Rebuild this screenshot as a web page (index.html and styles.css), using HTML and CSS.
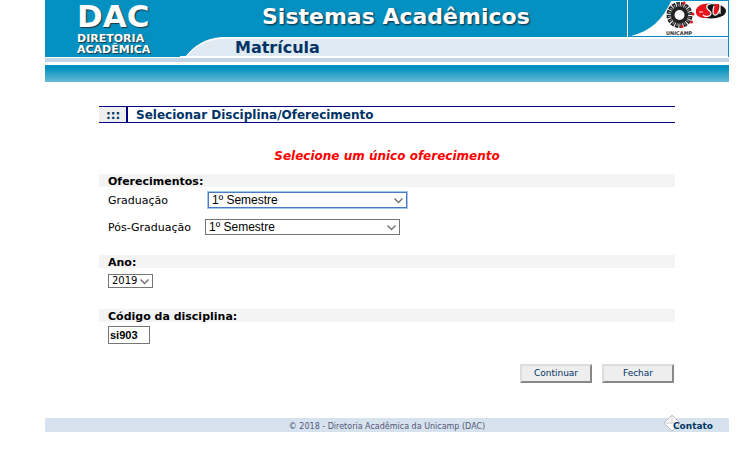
FILE: index.html
```html
<!DOCTYPE html>
<html lang="pt-BR">
<head>
<meta charset="utf-8">
<title>Sistemas Acadêmicos - Matrícula</title>
<link rel="stylesheet" href="styles.css">
</head>
<body>
<div class="page">
  <header class="header">
    <div class="brand"><strong>DAC</strong><span>DIRETORIA</span><span>ACADÊMICA</span></div>
    <div class="masthead">
      <div class="title-row">
        <h1>Sistemas Acadêmicos</h1>
        <svg class="logos" viewBox="0 0 102 37" role="img" aria-label="Unicamp">
          <rect width="102" height="37" fill="#0491c1"/>
          <path d="M0 0h1v37H0z" fill="#fff"/>
          <path d="M4 36C24 31 36 19 44 1H101V36Z" fill="#fff"/>
          <circle cx="52.500" cy="15" r="13" fill="#222"/>
          <circle cx="52.500" cy="15" r="11" fill="none" stroke="#fff" stroke-width="5" stroke-dasharray="1 3.320"/>
          <circle cx="52.500" cy="15" r="10" fill="none" stroke="#aaa" stroke-width="3" stroke-dasharray=".800 3.127" stroke-dashoffset="2"/>
          <circle cx="52.500" cy="15" r="5" fill="#fff"/>
          <g fill="#e8131b"><circle cx="57" cy="3" r="1.500"/><circle cx="66" cy="14" r="1.500"/><circle cx="64.500" cy="22" r="1.500"/><circle cx="55" cy="26.500" r="1.500"/></g>
          <ellipse cx="84" cy="11" rx="15" ry="7.500" fill="#151515"/>
          <path d="M69 12C69 6 75 3 82 4C78 6 79 9 83 11C85 14 83 17 79 18C73 18 69 16 69 12Z" fill="#e8131b"/>
          <path d="M88 4L92 4L91 14L87 15L86 10Z" fill="#e8131b"/>
          <path d="M88 4C82 3 79 5 80 8C81 11 85 11 84 14C83 17 78 17 76 15M87 6C85 12 86 16 89 15C92 14 93 8 93 5V14" fill="none" stroke="#fff" stroke-width="1.200"/>
          <path d="M72 12h4" stroke="#f5a3a5" stroke-width="1.500"/>
          <text x="39" y="35" class="unicamp">UNICAMP</text>
        </svg>
      </div>
      <div class="tab-row">
        <svg class="curve" viewBox="0 0 50 20" aria-hidden="true"><path d="M0 0H50L42 1C26 2 14 9 6 19H0Z" fill="#0491c1"/><path d="M50 0H42C25 1 14 9 6 19H50Z" fill="#fff"/><path d="M50 2H43C28 2 15 9 7 19H50Z" fill="#e0eaf3"/></svg>
        <h2>Matrícula</h2>
      </div>
    </div>
  </header>
  <div class="rule"></div>
  <div class="band"></div>

  <main class="content">
    <h3 class="heading"><span class="dots">:::</span><span class="heading-text">Selecionar Disciplina/Oferecimento</span></h3>
    <p class="notice">Selecione um único oferecimento</p>
    <form>
      <h4 class="section">Oferecimentos:</h4>
      <div class="field first">
        <label for="grad">Graduação</label>
        <span class="pick wide focused"><select id="grad"><option>1º Semestre</option><option>2º Semestre</option></select><svg viewBox="0 0 9 6" aria-hidden="true"><path d="M.5 .5L4.500 4.500L8.500 .5"/></svg></span>
      </div>
      <div class="field second">
        <label for="pos">Pós-Graduação</label>
        <span class="pick wide"><select id="pos"><option>1º Semestre</option><option>2º Semestre</option></select><svg viewBox="0 0 9 6" aria-hidden="true"><path d="M.5 .5L4.500 4.500L8.500 .5"/></svg></span>
      </div>
      <h4 class="section"><label for="ano">Ano:</label></h4>
      <div class="field year">
        <span class="pick small"><select id="ano"><option>2019</option><option>2018</option></select><svg viewBox="0 0 9 6" aria-hidden="true"><path d="M.5 .5L4.500 4.500L8.500 .5"/></svg></span>
      </div>
      <h4 class="section"><label for="codigo">Código da disciplina:</label></h4>
      <div class="field code"><input id="codigo" type="text" value="si903"></div>
      <div class="actions"><button type="submit">Continuar</button><button type="button">Fechar</button></div>
    </form>
  </main>

  <footer class="footer">
    <span class="copyright">© 2018 - Diretoria Acadêmica da Unicamp (DAC)</span>
    <a class="contact" href="#contato"><svg viewBox="0 0 18 18" aria-hidden="true"><path d="M1 9L9 1L17 9L9 17Z" fill="#fff" stroke="#bbb"/><path d="M9 1V9H17M9 9L1 9" fill="none" stroke="#ccc"/></svg><span>Contato</span></a>
  </footer>
</div>
</body>
</html>
```
FILE: styles.css
```css
* { box-sizing: border-box; }
body { margin: 0; background: #fff; color: #000; font: 11px/13px "DejaVu Sans", Verdana, sans-serif; }
h1, h2, h3, h4, p { margin: 0; }
.page { margin: 0 16px 0 45px; }

.header { display: flex; height: 57px; }
.brand { width: 135px; padding: 0 0 0 32px; background: #0491c1; color: #fff; font-weight: bold; font-size: 11px; line-height: 11px; text-shadow: 1px 1px 1px #234; }
.brand strong, .brand span { display: block; }
.brand strong { font-size: 31px; line-height: 33px; }
.masthead { flex: 1; }
.title-row { display: flex; height: 37px; background: #0491c1; }
.title-row h1 { flex: 1; padding-left: 82px; color: #fff; font-size: 22px; line-height: 34px; text-shadow: 1px 1px 2px #123; }
.logos { width: 102px; height: 37px; }
.unicamp { font: bold 5px "DejaVu Sans", sans-serif; fill: #333; }
.tab-row { display: flex; height: 20px; background: linear-gradient(#fff 2px, #e0eaf3 2px, #e0eaf3 19px, #fff 19px); border-right: 1px solid #0491c1; }
.curve { width: 50px; height: 20px; }
.tab-row h2 { padding-left: 5px; color: #036; font-size: 16px; line-height: 22px; }
.rule { height: 4px; margin-top: 1px; background: #c5d5e8; }
.band { height: 17px; margin-top: 3px; background: linear-gradient(#0491c1 20%, #69b9d5); }

.content { margin: 24px 54px 0; }
.heading { display: flex; height: 17px; border: solid #000080; border-width: 1px 0; color: #036; font-size: 12px; line-height: 16px; }
.dots { width: 29px; padding-left: 7px; background: #eee; border-right: 2px solid #000080; }
.heading-text { padding-left: 8px; }
.notice { margin: 25px 0 10px; color: #f00; font-size: 12px; line-height: 16px; font-weight: bold; font-style: italic; text-align: center; }
.section { height: 13px; padding-left: 9px; background: #f4f4f4; font-size: 11px; line-height: 15px; }
.field { display: flex; align-items: center; padding-left: 9px; }
.first { height: 26px; gap: 40px; }
.second { height: 28px; gap: 14px; margin-bottom: 14px; }
.year { height: 26px; margin-bottom: 15px; }
.code { height: 26px; }
.pick { position: relative; display: flex; }
.pick select { appearance: none; width: 100%; height: 16px; margin: 0; padding: 0 3px; border: 1px solid #767676; border-radius: 0; background: #fff; color: #000; font: 12px/14px "Liberation Sans", Arial, sans-serif; outline: 0; }
.pick svg { position: absolute; right: 4px; top: 6px; width: 9px; height: 6px; fill: none; stroke: #777; stroke-width: 1.5; pointer-events: none; }
.wide { width: 195px; }
.focused { width: 199px; }
.focused select { border-color: #4d7ac6; box-shadow: 0 0 0 1px #a2c4f8; }
.small { width: 45px; }
.small select { height: 14px; font: 10px/12px "DejaVu Sans", Verdana, sans-serif; }
.small svg { top: 5px; }
.code input { width: 42px; height: 18px; padding: 0 1px; border: 1px solid #767676; font: bold 11px "Liberation Sans", Arial, sans-serif; }
.actions { display: flex; justify-content: flex-end; gap: 10px; margin-top: 16px; padding-right: 1px; }
.actions button { width: 72px; height: 19px; padding: 0; background: #eee; color: #036; border: 2px solid; border-color: #ddd #888 #888 #ddd; font: 9px/13px "DejaVu Sans", Verdana, sans-serif; }

.footer { display: grid; grid-template-columns: 1fr auto 1fr; height: 14px; margin-top: 35px; background: #d6e3ee; }
.copyright { grid-column: 2; color: #557; font-size: 8px; line-height: 17px; }
.contact { display: flex; justify-content: flex-end; align-items: center; padding-right: 16px; color: #036; font-size: 9px; font-weight: bold; text-decoration: none; }
.contact svg { width: 18px; height: 18px; margin: -8px -8px 0 0; }
.contact span { position: relative; line-height: 17px; }
```
